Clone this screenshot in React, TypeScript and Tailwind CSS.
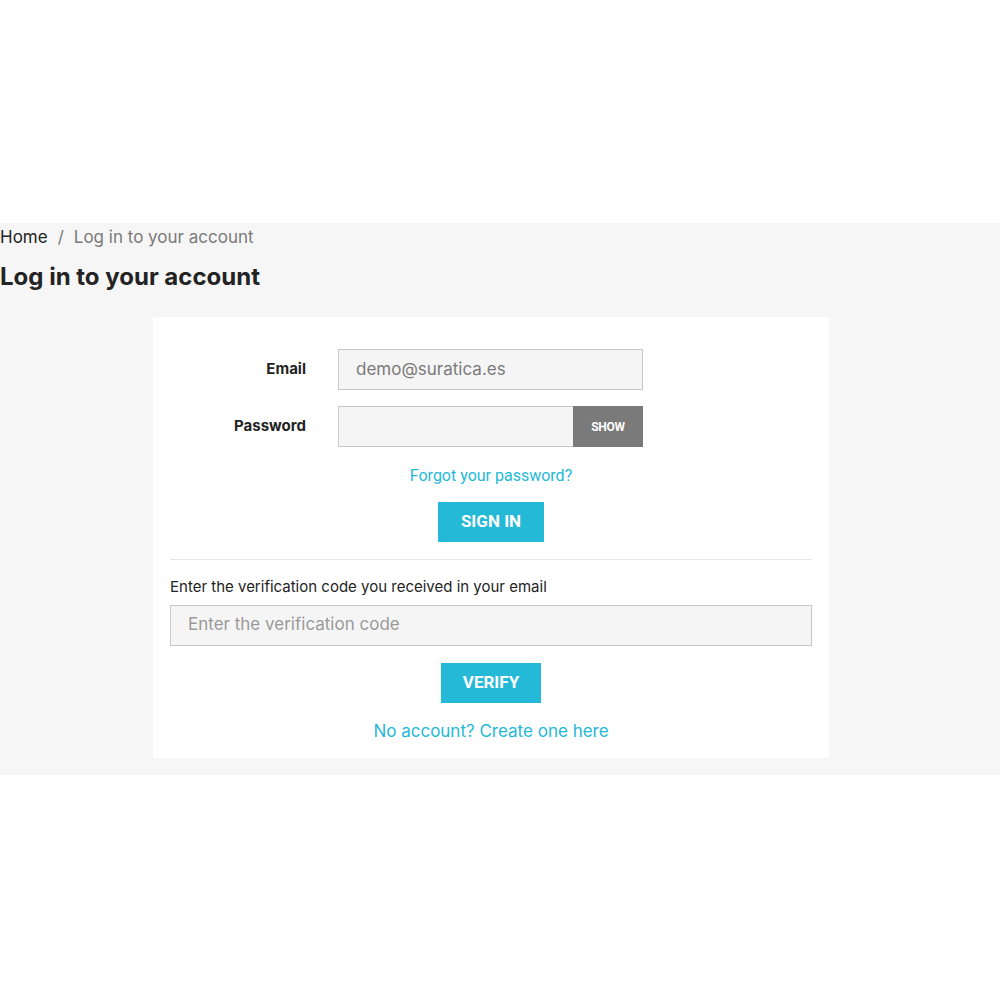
export default function App() {
  return (
    <div className="min-h-[1000px] bg-white font-['Inter',sans-serif] text-[#232323]">
      <div className="h-[223px]" />
      <section className="bg-[#f6f6f6] pb-[17px]">
        {/* Breadcrumb */}
        <nav className="flex h-[30px] items-center text-[17px]">
          <span className="text-[#232323]">Home</span>
          <span className="mx-[10px] text-[#7a7a7a]">/</span>
          <span className="text-[#7a7a7a]">Log in to your account</span>
        </nav>
        <h1 className="mt-[9px] text-[24px] font-bold leading-[30px]">Log in to your account</h1>

        {/* Card */}
        <div className="ml-[153px] mt-[25px] w-[676px] bg-white px-[17px] pt-[32px] pb-[14px]">
          <div className="flex flex-col gap-[16px]">
            <div className="flex items-center">
              <label className="w-[136px] text-right text-[15px] font-bold">Email</label>
              <div className="ml-[32px] flex h-[41px] w-[305px] items-center border border-[#c8c8c8] bg-[#f5f5f5] px-[17px] text-[17px] text-[#7a7a7a]">
                demo@suratica.es
              </div>
            </div>
            <div className="flex items-center">
              <label className="w-[136px] text-right text-[15px] font-bold">Password</label>
              <div className="ml-[32px] flex h-[41px] w-[305px]">
                <div className="flex-1 border border-r-0 border-[#c8c8c8] bg-[#f5f5f5]" />
                <button className="w-[70px] bg-[#7a7a7a] font-['Roboto',sans-serif] text-[12px] font-bold tracking-[-0.3px] text-white">
                  SHOW
                </button>
              </div>
            </div>
          </div>

          <div className="mt-[17px] text-center font-['Roboto',sans-serif] text-[16px] text-[#24b9d7]">
            Forgot your password?
          </div>
          <div className="mt-[14px] flex justify-center">
            <button className="h-[40px] w-[106px] bg-[#24b9d7] font-['Roboto',sans-serif] text-[17px] font-bold text-white">
              SIGN IN
            </button>
          </div>

          <hr className="mt-[17px] border-t border-[#e6e6e6]" />

          <p className="mt-[16px] text-[15px]">Enter the verification code you received in your email</p>
          <div className="mt-[6px] flex h-[41px] items-center border border-[#c8c8c8] bg-[#f5f5f5] px-[17px] text-[17px] text-[#9a9a9a]">
            Enter the verification code
          </div>
          <div className="mt-[17px] flex justify-center">
            <button className="h-[40px] w-[100px] bg-[#24b9d7] font-['Roboto',sans-serif] text-[17px] font-bold text-white">
              VERIFY
            </button>
          </div>
          <div className="mt-[16px] text-center text-[17px] text-[#24b9d7]">No account? Create one here</div>
        </div>
      </section>
    </div>
  )
}
